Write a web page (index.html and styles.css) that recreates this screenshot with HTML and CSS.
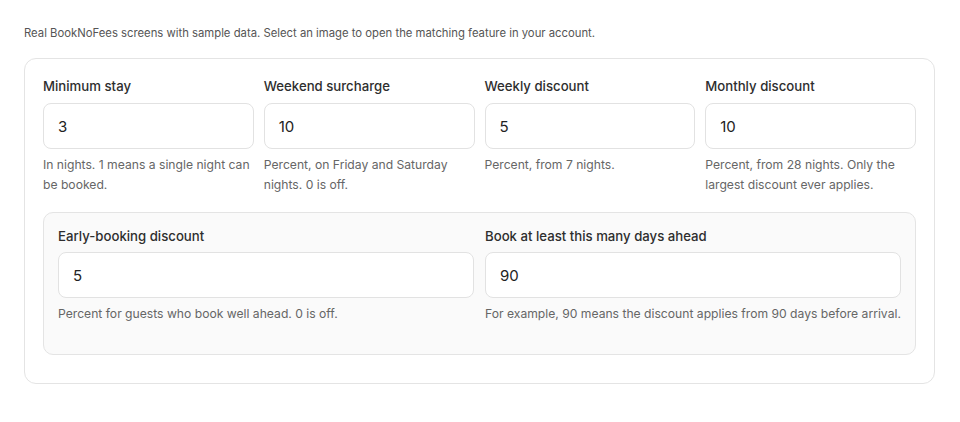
FILE: index.html
```html
<!DOCTYPE html>
<html lang="en">
<head>
<meta charset="utf-8">
<title>Pricing rules</title>
<link rel="stylesheet" href="styles.css">
</head>
<body>
<p class="intro">Real BookNoFees screens with sample data. Select an image to open the matching feature in your account.</p>
<section class="card">
  <div class="grid4">
    <div class="field">
      <label class="label">Minimum stay</label>
      <div class="input">3</div>
      <p class="help">In nights. 1 means a single night can be booked.</p>
    </div>
    <div class="field">
      <label class="label">Weekend surcharge</label>
      <div class="input">10</div>
      <p class="help">Percent, on Friday and Saturday nights. 0 is off.</p>
    </div>
    <div class="field">
      <label class="label">Weekly discount</label>
      <div class="input">5</div>
      <p class="help">Percent, from 7 nights.</p>
    </div>
    <div class="field">
      <label class="label">Monthly discount</label>
      <div class="input">10</div>
      <p class="help">Percent, from 28 nights. Only the largest discount ever applies.</p>
    </div>
  </div>
  <div class="panel">
    <div class="field">
      <label class="label">Early-booking discount</label>
      <div class="input">5</div>
      <p class="help">Percent for guests who book well ahead. 0 is off.</p>
    </div>
    <div class="field">
      <label class="label">Book at least this many days ahead</label>
      <div class="input">90</div>
      <p class="help">For example, 90 means the discount applies from 90 days before arrival.</p>
    </div>
  </div>
</section>
</body>
</html>
```
FILE: styles.css
```css
* { box-sizing: border-box; }
html, body { margin: 0; padding: 0; background: #fff; }
body {
  font-family: Inter, "Noto Sans", sans-serif;
  color: #333;
  padding: 0 25px 0 24px;
}
.intro {
  margin: 0;
  padding-top: 26px;
  font-size: 11.3px;
  line-height: 14px;
  color: #555;
}
.card {
  margin-top: 18px;
  border: 1px solid #e4e4e4;
  border-radius: 12px;
  padding: 18px 18px 28px 18px;
  display: flex;
  flex-direction: column;
  gap: 17px;
}
.grid4 {
  display: grid;
  grid-template-columns: repeat(4, 1fr);
  column-gap: 10px;
}
.field { display: flex; flex-direction: column; }
.label {
  font-size: 13.2px;
  font-weight: 500;
  line-height: 18px;
  color: #2e2e2e;
  margin-bottom: 8px;
}
.input {
  height: 46px;
  border: 1px solid #e2e2e2;
  border-radius: 8px;
  background: #fff;
  padding: 0 14px;
  display: flex;
  align-items: center;
  font-size: 15px;
  color: #222;
}
.help {
  margin: 6px 0 0;
  font-size: 12.15px;
  line-height: 20px;
  color: #666;
}
.panel {
  background: #fafafa;
  border: 1px solid #e4e4e4;
  border-radius: 10px;
  padding: 14px 14px 30px;
  display: grid;
  grid-template-columns: 1fr 1fr;
  column-gap: 11px;
}
.panel .input { margin-top: -1px; }
```
